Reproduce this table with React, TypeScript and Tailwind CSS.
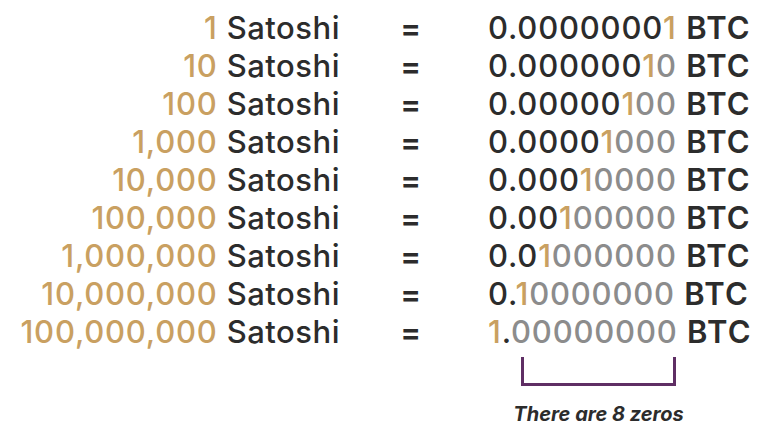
import React from 'react';

const GOLD = 'text-[#c9a061]';
const GRAY = 'text-[#8c8c8c]';

const rows = [
  { sat: '1', pos: 8 },
  { sat: '10', pos: 7 },
  { sat: '100', pos: 6 },
  { sat: '1,000', pos: 5 },
  { sat: '10,000', pos: 4 },
  { sat: '100,000', pos: 3 },
  { sat: '1,000,000', pos: 2 },
  { sat: '10,000,000', pos: 1 },
  { sat: '100,000,000', pos: 0 },
];

// pos = index of the "1" among the 9 digits (0 = before the dot)
const BtcValue = ({ pos }: { pos: number }) => {
  const digits = '000000000'.split('');
  return (
    <span className="font-medium">
      {digits.map((d, i) => {
        const isOne = i === pos;
        const color = isOne ? GOLD : i > pos ? GRAY : '';
        return (
          <React.Fragment key={i}>
            <span className={color}>{isOne ? '1' : d}</span>
            {i === 0 && <span>.</span>}
          </React.Fragment>
        );
      })}
    </span>
  );
};

const App = () => {
  return (
    <div className="w-[781px] h-[426px] bg-white text-[#2c2c2c] font-['Inter',sans-serif] pt-[9px]">
      <div className="flex flex-col">
        {rows.map(row => (
          <div key={row.sat} className="flex items-center text-[31px] leading-[38px] tracking-[0.8px]">
            <div className="w-[340px] text-right whitespace-nowrap font-medium">
              <span className={GOLD}>{row.sat}</span> <span className="tracking-[0.5px]">Satoshi</span>
            </div>
            <div className="w-[148px] text-center pr-[6px] font-semibold">=</div>
            <div className="whitespace-nowrap">
              <BtcValue pos={row.pos} /> <span className="font-semibold tracking-[1.2px]">BTC</span>
            </div>
          </div>
        ))}
      </div>
      <div className="flex">
        <div className="w-[521px]" />
        <div className="flex flex-col items-center w-[155px]">
          <div className="w-[155px] h-[29px] mt-[6px] border-l-[3px] border-r-[3px] border-b-[3px] border-[#5f2e64]" />
          <div className="mt-[16px] whitespace-nowrap text-[20px] leading-[24px] font-bold italic text-[#2c2c2c]">
            There are 8 zeros
          </div>
        </div>
      </div>
    </div>
  );
};

export default App;
